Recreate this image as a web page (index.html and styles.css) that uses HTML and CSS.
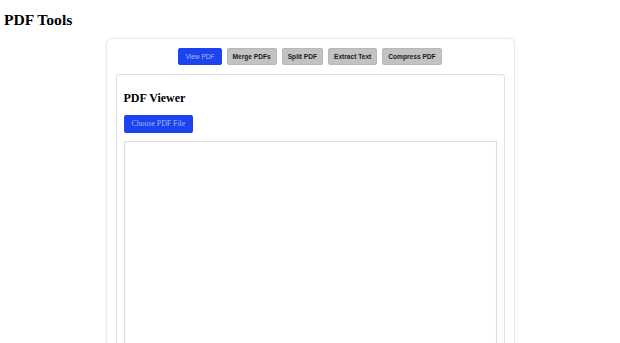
FILE: index.html
```html
<!DOCTYPE html>
<html lang="en">
<head>
<meta charset="utf-8">
<title>PDF Tools</title>
<link rel="stylesheet" href="styles.css">
</head>
<body>
<h1 class="title">PDF Tools</h1>
<div class="container">
  <div class="tabs">
    <button class="tab active">View PDF</button>
    <button class="tab">Merge PDFs</button>
    <button class="tab">Split PDF</button>
    <button class="tab">Extract Text</button>
    <button class="tab">Compress PDF</button>
  </div>
  <div class="panel">
    <h2 class="panel-title">PDF Viewer</h2>
    <button class="choose">Choose PDF File</button>
    <div class="viewer"></div>
  </div>
</div>
</body>
</html>
```
FILE: styles.css
```css
html, body {
  background: #fff;
}
body {
  margin: 0;
  padding: 0 4px;
  font-family: "Liberation Serif", "Times New Roman", serif;
  color: #000;
  overflow: hidden;
}
.title {
  font-size: 15.6px;
  line-height: 18px;
  margin: 11px 0 0;
  font-weight: bold;
}
.container {
  width: 389px;
  margin: 9px auto 0;
  padding: 9px 9px 0;
  border: 1px solid #e9e9ec;
  border-bottom: none;
  border-radius: 6px 6px 0 0;
  box-shadow: 0 0 3px rgba(0, 0, 0, 0.06);
  background: #fff;
}
.tabs {
  display: flex;
  justify-content: center;
  gap: 5px;
}
.tab {
  height: 17px;
  padding: 0 5px;
  border: 1px solid #b8b8b8;
  border-radius: 2px;
  background: #c2c2c2;
  color: #1a1a1a;
  font-family: "Liberation Sans", Arial, sans-serif;
  font-weight: bold;
  font-size: 6.6px;
  line-height: 15px;
  cursor: pointer;
}
.tab.active {
  background: #1c43f0;
  border-color: #1c43f0;
  color: #aab7f2;
  font-weight: normal;
  padding: 0 6px;
}
.panel {
  margin-top: 9px;
  padding: 16px 7px 0;
  border: 1px solid #dfe0e4;
  border-bottom: none;
  border-radius: 3px 3px 0 0;
  height: 280px;
}
.panel-title {
  font-size: 12px;
  line-height: 14px;
  margin: 0;
  font-weight: bold;
}
.choose {
  display: block;
  margin-top: 10px;
  height: 18px;
  padding: 0 8px;
  border: none;
  border-radius: 2px;
  background: #1c43f0;
  color: #a9b5ee;
  font-family: "Liberation Serif", "Times New Roman", serif;
  font-size: 7.8px;
  line-height: 18px;
}
.viewer {
  margin-top: 8px;
  height: 260px;
  border: 1px solid #dcdde2;
  box-shadow: inset 0 0 1px rgba(0, 0, 0, 0.05);
}
```
